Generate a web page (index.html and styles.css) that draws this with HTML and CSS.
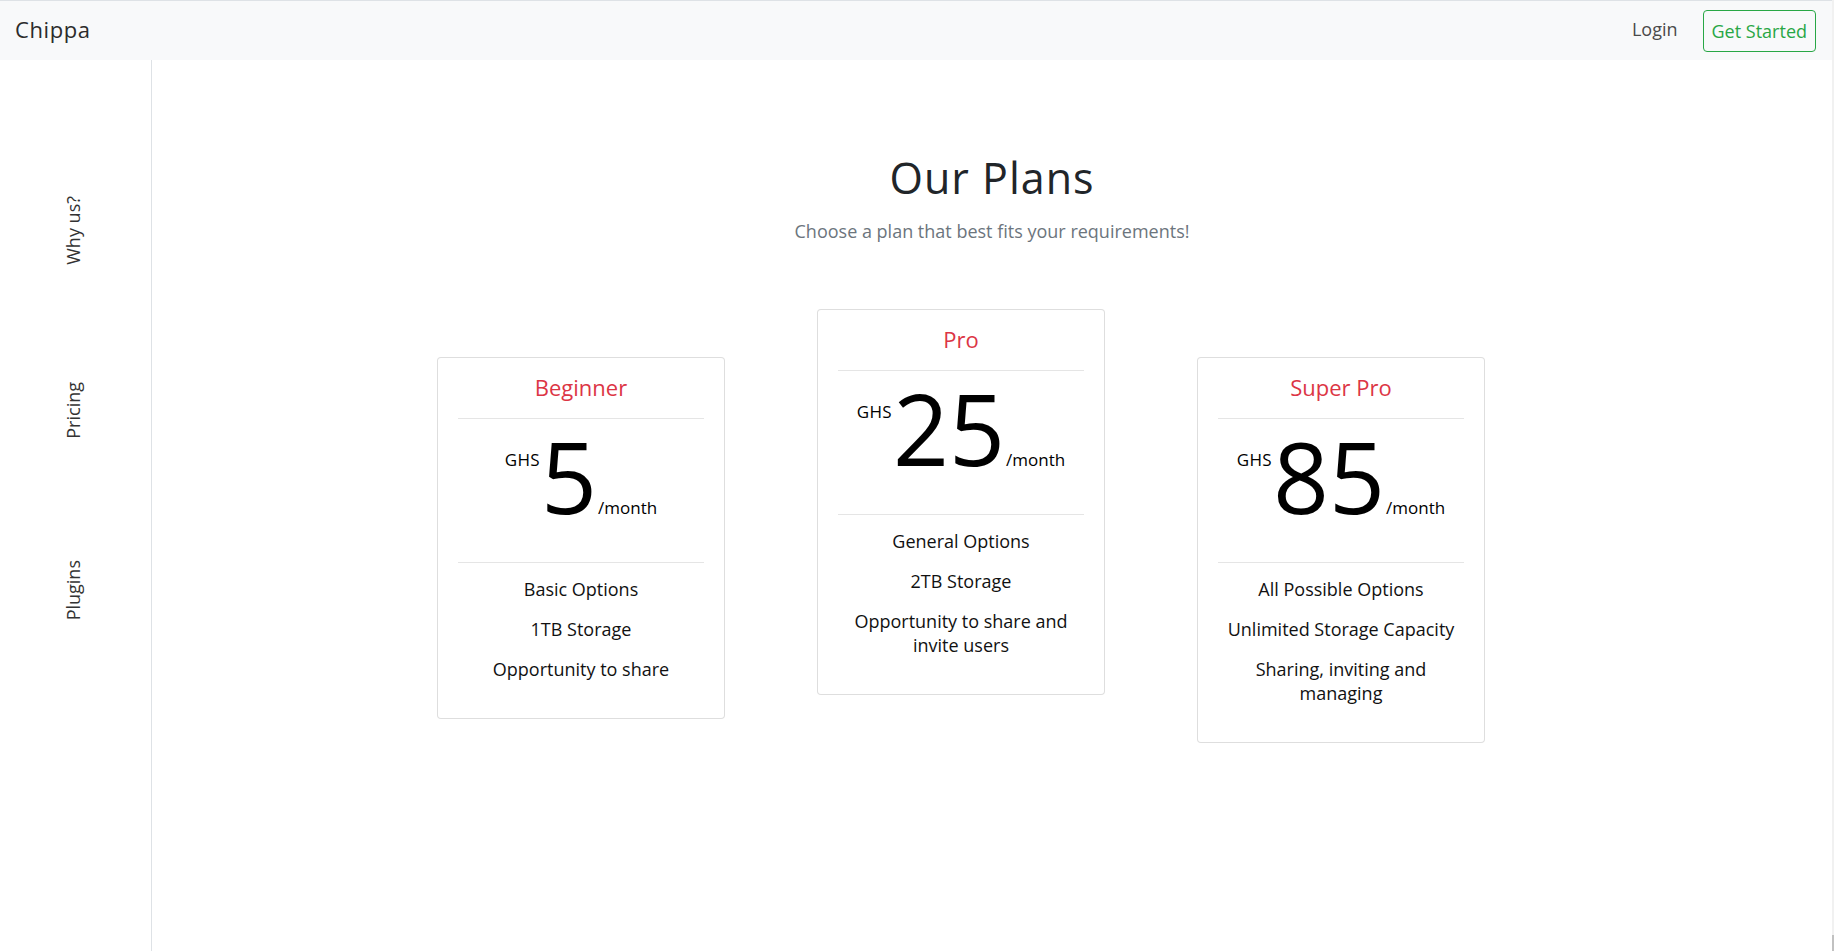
FILE: index.html
```html
<!DOCTYPE html>
<html lang="en">
<head>
<meta charset="utf-8">
<title>Chippa - Our Plans</title>
<link rel="stylesheet" href="styles.css">
</head>
<body>
<div class="page">
  <header class="navbar">
    <a class="brand" href="#">Chippa</a>
    <nav class="nav-right">
      <a class="nav-link" href="#">Login</a>
      <a class="btn-outline" href="#">Get Started</a>
    </nav>
  </header>
  <div class="layout">
    <aside class="sidebar">
      <div class="side-slot"><a class="side-link" href="#">Why us?</a></div>
      <div class="side-slot"><a class="side-link" href="#">Pricing</a></div>
      <div class="side-slot"><a class="side-link" href="#">Plugins</a></div>
    </aside>
    <main class="main">
      <h1 class="title">Our Plans</h1>
      <p class="lead">Choose a plan that best fits your requirements!</p>
      <div class="plans">
        <div class="card">
          <h5 class="card-title">Beginner</h5>
          <hr class="rule rule-top">
          <div class="price">
            <span class="cur">GHS</span>
            <span class="amount">5</span>
            <span class="per">/month</span>
          </div>
          <hr class="rule rule-bottom">
          <p class="feat">Basic Options</p>
          <p class="feat">1TB Storage</p>
          <p class="feat">Opportunity to share</p>
        </div>
        <div class="card card-featured">
          <h5 class="card-title">Pro</h5>
          <hr class="rule rule-top">
          <div class="price">
            <span class="cur">GHS</span>
            <span class="amount">25</span>
            <span class="per">/month</span>
          </div>
          <hr class="rule rule-bottom">
          <p class="feat">General Options</p>
          <p class="feat">2TB Storage</p>
          <p class="feat">Opportunity to share and invite users</p>
        </div>
        <div class="card">
          <h5 class="card-title">Super Pro</h5>
          <hr class="rule rule-top">
          <div class="price">
            <span class="cur">GHS</span>
            <span class="amount">85</span>
            <span class="per">/month</span>
          </div>
          <hr class="rule rule-bottom">
          <p class="feat">All Possible Options</p>
          <p class="feat">Unlimited Storage Capacity</p>
          <p class="feat">Sharing, inviting and managing</p>
        </div>
      </div>
    </main>
  </div>
</div>
<div class="scroll-thumb"></div>
</body>
</html>
```

FILE: styles.css
```css
* { box-sizing: border-box; }

html {
  background: #f1f1f1;
}

body {
  margin: 0 2px 0 0;
  background: #ffffff;
  font-family: "Open Sans", "Noto Sans", sans-serif;
  color: #212529;
  height: 951px;
  overflow: hidden;
}

.page {
  display: flex;
  flex-direction: column;
  height: 100%;
}

.navbar {
  flex: 0 0 auto;
  height: 60px;
  border-top: 1px solid #dee2e6;
  background: #f8f9fa;
  display: flex;
  align-items: center;
  justify-content: space-between;
  padding: 0 16px 0 15px;
}

.brand {
  font-size: 22px;
  color: #2b2b2b;
  text-decoration: none;
  letter-spacing: 0.6px;
  line-height: 30px;
  margin-bottom: 4px;
}

.nav-right {
  display: flex;
  align-items: center;
  gap: 25px;
}

.nav-link {
  font-size: 18px;
  color: #4a4a4a;
  text-decoration: none;
  margin-bottom: 4px;
}

.btn-outline {
  display: block;
  font-size: 18px;
  line-height: 26px;
  padding: 7px 8px;
  color: #28a745;
  border: 1px solid #28a745;
  border-radius: 4px;
  text-decoration: none;
}

.layout {
  flex: 1 1 auto;
  display: flex;
}

.sidebar {
  flex: 0 0 152px;
  border-right: 1px solid #dee2e6;
  padding: 80px 5px 0 0;
  display: flex;
  flex-direction: column;
}

.side-slot {
  height: 180px;
  display: flex;
  align-items: center;
  justify-content: center;
}

.side-link {
  writing-mode: vertical-rl;
  transform: rotate(180deg);
  font-size: 18px;
  line-height: 27px;
  color: #333333;
  text-decoration: none;
}

.main {
  flex: 1 1 auto;
  padding-top: 92px;
  text-align: center;
}

.title {
  margin: 0;
  font-size: 43px;
  font-weight: 400;
  line-height: 1.2;
  letter-spacing: 1px;
  color: #212529;
}

.lead {
  margin: 14px 0 0;
  font-size: 18px;
  line-height: 27px;
  color: #6c757d;
}

.plans {
  display: flex;
  justify-content: center;
  align-items: flex-start;
  gap: 92px;
  margin-top: 64px;
  padding-right: 62px;
}

.card {
  width: 288px;
  margin-top: 48px;
  padding: 20px;
  border: 1px solid rgba(0, 0, 0, 0.13);
  border-radius: 4px;
  background: #fff;
  text-align: center;
}

.card-featured {
  margin-top: 0;
}

.card-title {
  margin: 0;
  font-size: 22px;
  font-weight: 400;
  line-height: 19px;
  color: #dc3545;
}

.rule {
  border: 0;
  border-top: 1px solid rgba(0, 0, 0, 0.1);
  height: 0;
}

.rule-top {
  margin: 21px 0 16px;
}

.rule-bottom {
  margin: 16px 0 14px;
}

.price {
  height: 111px;
  display: flex;
  justify-content: center;
  align-items: baseline;
  color: #000;
}

.cur {
  align-self: flex-start;
  margin-top: 16px;
  font-size: 17px;
  line-height: 17px;
  letter-spacing: 0.3px;
}

.amount {
  font-size: 98px;
  font-weight: 500;
  line-height: 82px;
  margin: 0 0 0 1px;
}

.per {
  font-size: 17px;
  margin-left: 1px;
}

.feat {
  margin: 0 0 16px;
  font-size: 18px;
  line-height: 24px;
  color: #111;
}

.feat:last-child {
  margin-bottom: 17px;
}

.scroll-thumb {
  position: absolute;
  right: 0;
  top: 935px;
  width: 2px;
  height: 16px;
  background: #c1c1c1;
}
```
